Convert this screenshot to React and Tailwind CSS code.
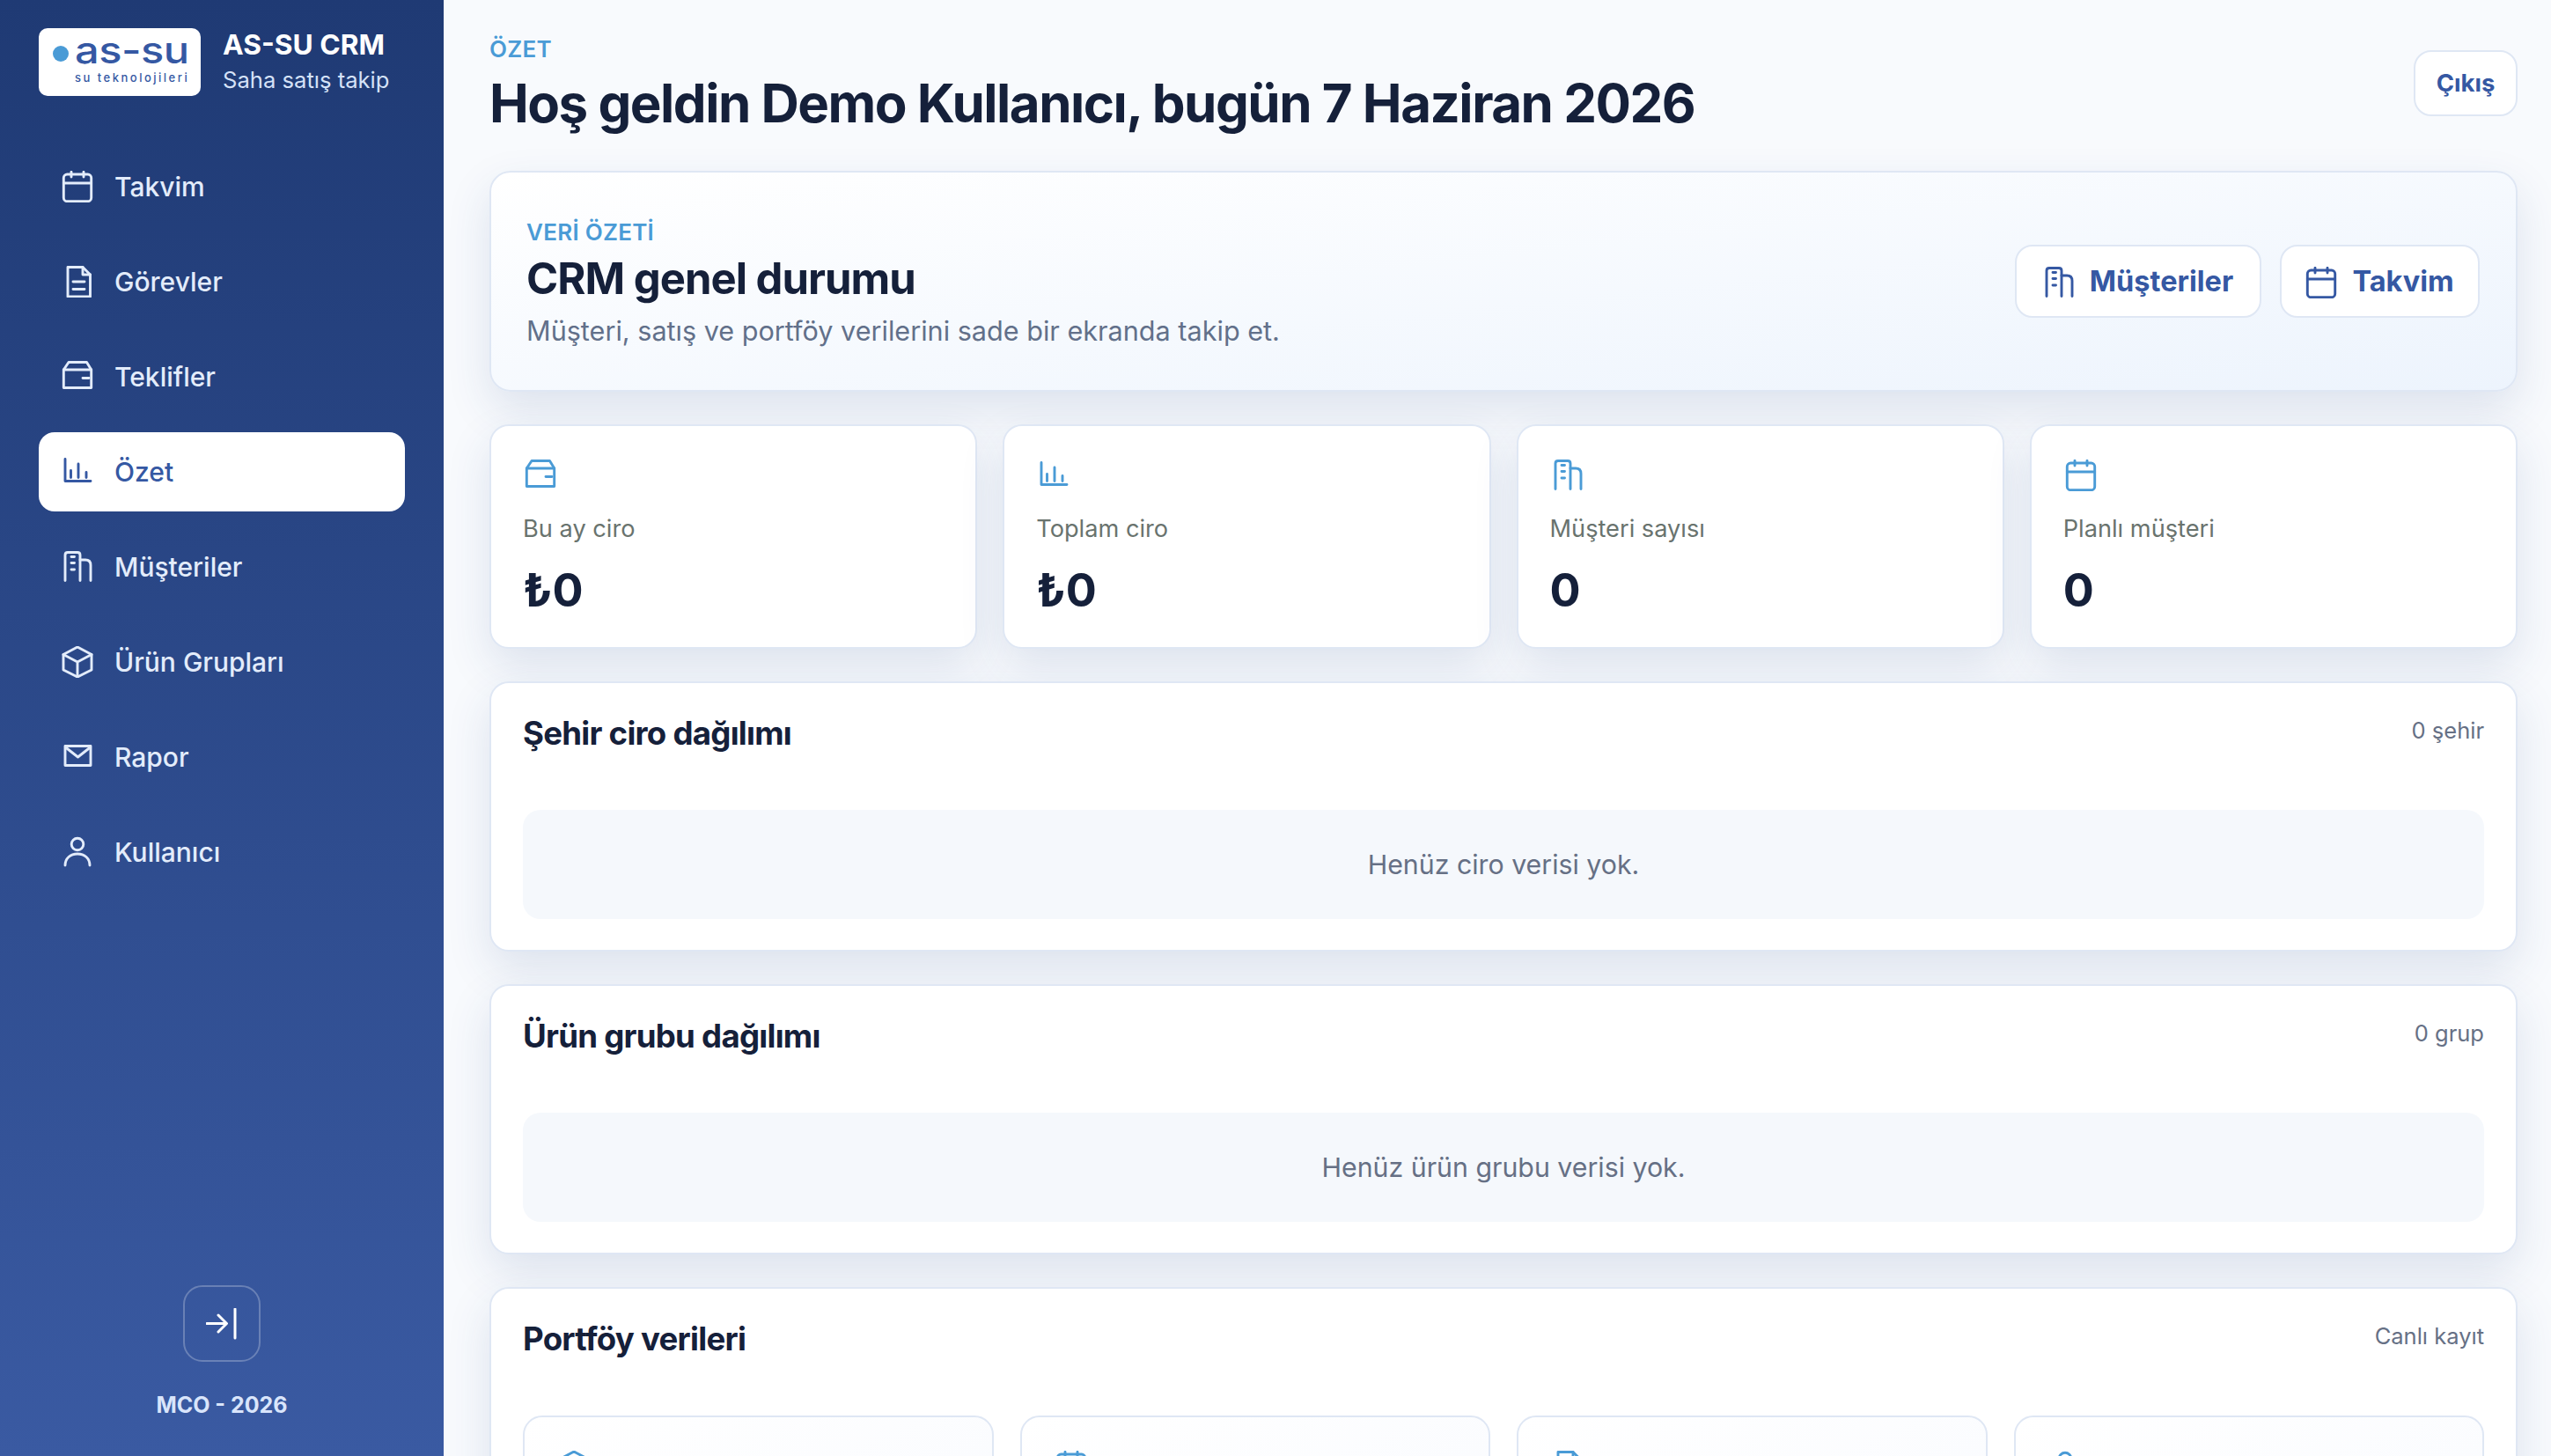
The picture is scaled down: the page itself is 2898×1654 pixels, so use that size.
import React from "react";

const Svg = ({ className = "", children }) => (
  <svg viewBox="0 0 36 36" fill="none" stroke="currentColor" strokeWidth="2.9" strokeLinecap="round" strokeLinejoin="round" className={`w-[36px] h-[36px] shrink-0 ${className}`}>
    {children}
  </svg>
);
const CalendarIcon = (p) => (
  <Svg {...p}>
    <rect x="2.3" y="4" width="31.4" height="30.7" rx="4" />
    <path d="M2.3 14H33.7M11 1.3V7M25 1.3V7" />
  </Svg>
);
const DocIcon = (p) => (
  <Svg {...p}>
    <path d="M7 1.5H24L32.5 10V35H7Z" />
    <path d="M24 1.5V10H32.5M13 18H26M13 26.5H26" />
  </Svg>
);
const WalletIcon = (p) => (
  <Svg {...p}>
    <path d="M2.3 10L8 1.5H28.5L33.7 10V30.5H2.3Z" />
    <path d="M2.3 10H33.7M24 19.5H31" />
  </Svg>
);
const BarsIcon = (p) => (
  <Svg {...p}>
    <path d="M4 3.5V28.5H33M10.5 16.5V24.5M19 9V24.5M28 18.5V24.5" />
  </Svg>
);
const BuildingIcon = (p) => (
  <Svg {...p}>
    <path d="M4 33.5V4.5Q4 1.5 7 1.5H18Q21 1.5 21 4.5V33.5" />
    <path d="M21 10H27Q33 10 33 16V33.5M11 6.5H14.5M11 13.5H14.5M11 21H14.5" />
  </Svg>
);
const BoxIcon = (p) => (
  <Svg {...p}>
    <path d="M18 1L34 9.5V27L18 35L2 27V9.5Z" />
    <path d="M2 9.5L18 18L34 9.5M18 18V35" />
  </Svg>
);
const MailIcon = (p) => (
  <Svg {...p}>
    <rect x="4" y="5.5" width="29" height="22" />
    <path d="M4.5 7L18.5 18L32.5 7" />
  </Svg>
);
const UserIcon = (p) => (
  <Svg {...p}>
    <circle cx="18" cy="9" r="6.8" />
    <path d="M4 33C4 25 10 20 18 20C26 20 32 25 32 33" />
  </Svg>
);

const nav = [
  ["Takvim", CalendarIcon],
  ["Görevler", DocIcon],
  ["Teklifler", WalletIcon],
  ["Özet", BarsIcon, true],
  ["Müşteriler", BuildingIcon],
  ["Ürün Grupları", BoxIcon],
  ["Rapor", MailIcon],
  ["Kullanıcı", UserIcon],
];

const stats = [
  ["Bu ay ciro", "₺0", WalletIcon],
  ["Toplam ciro", "₺0", BarsIcon],
  ["Müşteri sayısı", "0", BuildingIcon],
  ["Planlı müşteri", "0", CalendarIcon],
];

const Section = ({ title, meta, children }) => (
  <section className="rounded-[22px] border-2 border-[#dfe7f4] bg-white px-[36px] pt-[36px] pb-[35px] shadow-[0_20px_50px_rgba(36,68,130,0.13)]">
    <div className="mb-[66px] flex h-[42px] items-start justify-between">
      <h2 className="text-[36.6px] leading-[42px] font-bold tracking-[-0.02em] text-[#15203a]">{title}</h2>
      <span className="text-[25.5px] leading-[36px] text-[#667085]">{meta}</span>
    </div>
    {children}
  </section>
);

const Empty = ({ children }) => (
  <div className="flex h-[124px] items-center justify-center rounded-[20px] bg-[#f5f8fc] pt-[2px] text-[30.3px] text-[#667085]">{children}</div>
);

export default function App() {
  return (
    <div className="flex h-[1654px] w-full overflow-hidden bg-[#f8fafd] font-[Inter,sans-serif]">
      <aside className="flex w-[504px] shrink-0 flex-col bg-gradient-to-b from-[#1f3a74] to-[#3a5aa2] px-[44px]">
        <div className="mt-[32px] flex h-[77px] items-center gap-[25px]">
          <div className="relative h-[77px] w-[184px] shrink-0 rounded-[10px] bg-white">
            <span className="absolute left-[16px] top-[20px] h-[18px] w-[18px] rounded-full bg-[#4a9bd6]" />
            <div className="absolute left-[41px] top-[1px] origin-left scale-x-[1.16] text-[42px] leading-[48px] font-medium tracking-[-0.01em] text-[#3558a3]">as-su</div>
            <div className="absolute left-[41px] top-[48px] text-[13px] leading-[16px] font-medium tracking-[2.5px] whitespace-nowrap text-[#3558a3]">su teknolojileri</div>
          </div>
          <div className="min-w-0">
            <div className="-mt-[2px] text-[31.7px] leading-[38px] font-bold whitespace-nowrap text-white">AS-SU CRM</div>
            <div className="mt-[4px] text-[25.6px] leading-[33px] whitespace-nowrap text-[#d5e2f8]">Saha satış takip</div>
          </div>
        </div>
        <nav className="mt-[58px] flex flex-col gap-[18px]">
          {nav.map(([label, Icon, active]) => (
            <div key={label} className={`flex h-[90px] items-center gap-[24px] rounded-[18px] pl-[26px] ${active ? "bg-white text-[#3558a3]" : "text-[#e3ecfb]"}`}>
              <Icon />
              <span className="text-[30px] font-medium">{label}</span>
            </div>
          ))}
        </nav>
        <div className="mt-auto flex flex-col items-center pb-[42px]">
          <button className="flex h-[87px] w-[88px] items-center justify-center rounded-[22px] border-2 border-white/25 text-white">
            <svg viewBox="0 0 36 36" fill="none" stroke="currentColor" strokeWidth="3" strokeLinecap="round" strokeLinejoin="round" className="h-[36px] w-[36px]">
              <path d="M1 17.5H23M14 8L23.5 17.5L14 27M33 1V34" />
            </svg>
          </button>
          <div className="mt-[33px] text-[25px] leading-[32px] font-bold text-[#d9e5fb]">MCO - 2026</div>
        </div>
      </aside>

      <main className="flex min-w-0 flex-1 flex-col pr-[38px] pl-[52px]">
        <header className="flex h-[194px] shrink-0 items-start justify-between">
          <div className="pt-[38px]">
            <div className="text-[26px] leading-[36px] font-semibold tracking-[0.01em] text-[#4a9bd6]">ÖZET</div>
            <h1 className="mt-[5px] text-[60px] leading-[76px] font-bold tracking-[-0.025em] whitespace-nowrap text-[#15203a]">Hoş geldin Demo Kullanıcı, bugün 7 Haziran 2026</h1>
          </div>
          <button className="mt-[57px] flex h-[75px] w-[118px] items-center justify-center rounded-[20px] border-2 border-[#dfe7f4] bg-white pt-[1px] text-[27.5px] font-bold text-[#3558a3]">Çıkış</button>
        </header>

        <div className="flex shrink-0 flex-col gap-[37px]">
          <section className="flex h-[251px] items-center justify-between rounded-[24px] border-2 border-[#dfe7f4] bg-gradient-to-br from-white to-[#edf4fd] pr-[41px] pl-[40px] shadow-[0_20px_50px_rgba(36,68,130,0.13)]">
            <div className="pt-[4px]">
              <div className="text-[26px] leading-[36px] font-semibold tracking-[0.01em] text-[#4a9bd6]">VERİ ÖZETİ</div>
              <h2 className="mt-[5px] text-[49px] leading-[60px] font-bold tracking-[-0.02em] text-[#15203a]">CRM genel durumu</h2>
              <p className="mt-[7px] text-[30.6px] leading-[44px] text-[#62708a]">Müşteri, satış ve portföy verilerini sade bir ekranda takip et.</p>
            </div>
            <div className="flex gap-[21px]">
              <button className="flex h-[83px] w-[280px] items-center justify-center gap-[17px] rounded-[20px] border-2 border-[#dfe7f4] bg-white pt-[2px] text-[32.5px] font-bold text-[#3558a3]"><BuildingIcon />Müşteriler</button>
              <button className="flex h-[83px] w-[227px] items-center justify-center gap-[17px] rounded-[20px] border-2 border-[#dfe7f4] bg-white pt-[2px] text-[32.5px] font-bold text-[#3558a3]"><CalendarIcon />Takvim</button>
            </div>
          </section>

          <div className="grid grid-cols-4 gap-[29px]">
            {stats.map(([label, value, Icon]) => (
              <div key={label} className="h-[255px] rounded-[22px] border-2 border-[#dfe7f4] bg-white pt-[38px] pl-[36px] shadow-[0_20px_50px_rgba(36,68,130,0.13)]">
                <Icon className="ml-[2px] text-[#4a9bd6]" />
                <div className="mt-[23px] text-[27.2px] leading-[40px] text-[#69736e]">{label}</div>
                <div className="mt-[18px] text-[52px] leading-[64px] font-bold text-[#15203a]">{value}</div>
              </div>
            ))}
          </div>

          <Section title="Şehir ciro dağılımı" meta="0 şehir"><Empty>Henüz ciro verisi yok.</Empty></Section>
          <Section title="Ürün grubu dağılımı" meta="0 grup"><Empty>Henüz ürün grubu verisi yok.</Empty></Section>
          <Section title="Portföy verileri" meta="Canlı kayıt">
            <div className="grid grid-cols-4 gap-[30px]">
              {[BoxIcon, CalendarIcon, DocIcon, UserIcon].map((Icon, i) => (
                <div key={i} className="h-[220px] rounded-[22px] border-2 border-[#dfe7f4] bg-gradient-to-br from-white to-[#f8fafe] pt-[38px] pl-[38px]">
                  <Icon className="text-[#4a9bd6]" />
                </div>
              ))}
            </div>
          </Section>
        </div>
      </main>
    </div>
  );
}
